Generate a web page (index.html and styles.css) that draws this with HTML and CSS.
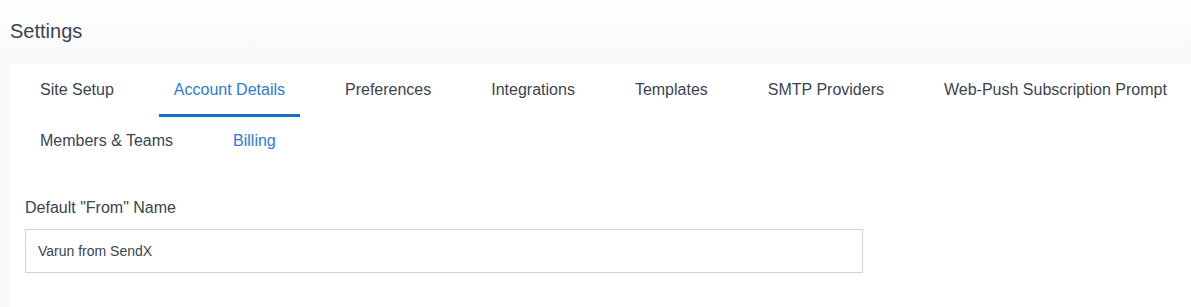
FILE: index.html
```html
<!DOCTYPE html>
<html>
<head>
<meta charset="utf-8">
<link rel="stylesheet" href="styles.css">
</head>
<body>
<div class="page">
  <h1 class="title">Settings</h1>
  <div class="card">
    <nav class="tabs">
      <a class="tab">Site Setup</a>
      <a class="tab active">Account Details</a>
      <a class="tab">Preferences</a>
      <a class="tab">Integrations</a>
      <a class="tab">Templates</a>
      <a class="tab">SMTP Providers</a>
      <a class="tab">Web-Push Subscription Prompt</a>
      <a class="tab">Members &amp; Teams</a>
      <a class="tab link">Billing</a>
    </nav>
    <div class="form">
      <label class="label">Default "From" Name</label>
      <div class="input">Varun from SendX</div>
    </div>
  </div>
</div>
</body>
</html>
```

FILE: styles.css
```css
html, body {
  margin: 0;
  padding: 0;
}
body {
  font-family: "Liberation Sans", Arial, sans-serif;
  background: linear-gradient(#ffffff 0px, #f7f8f8 64px, #f7f8f8 100%);
  color: #3b4451;
  height: 307px;
  overflow: hidden;
}
.title {
  margin: 0;
  padding: 20px 10px 0;
  height: 44px;
  font-size: 20px;
  line-height: 22px;
  font-weight: normal;
  color: #3b4451;
}
.card {
  margin-left: 10px;
  margin-right: -20px;
  background: #fff;
  padding: 0 15px;
  height: 243px;
}
.tabs {
  display: flex;
  flex-wrap: wrap;
  column-gap: 30px;
}
.tab {
  padding: 16px 15px 14px;
  margin-bottom: -2px;
  font-size: 16px;
  line-height: 20px;
  border-bottom: 3px solid transparent;
  color: #3b4451;
  white-space: nowrap;
}
.tab.active {
  color: #2d7bd4;
  border-bottom-color: #1b6ec2;
}
.tab.link {
  color: #2d7bd4;
}
.form {
  padding-top: 33px;
}
.label {
  display: block;
  font-size: 16px;
  line-height: 18px;
  color: #3b4451;
  margin-bottom: 12px;
}
.input {
  width: 812px;
  height: 42px;
  border: 1px solid #d3d3dc;
  padding: 0 12px;
  font-size: 14px;
  line-height: 42px;
  color: #3b4451;
}
```
